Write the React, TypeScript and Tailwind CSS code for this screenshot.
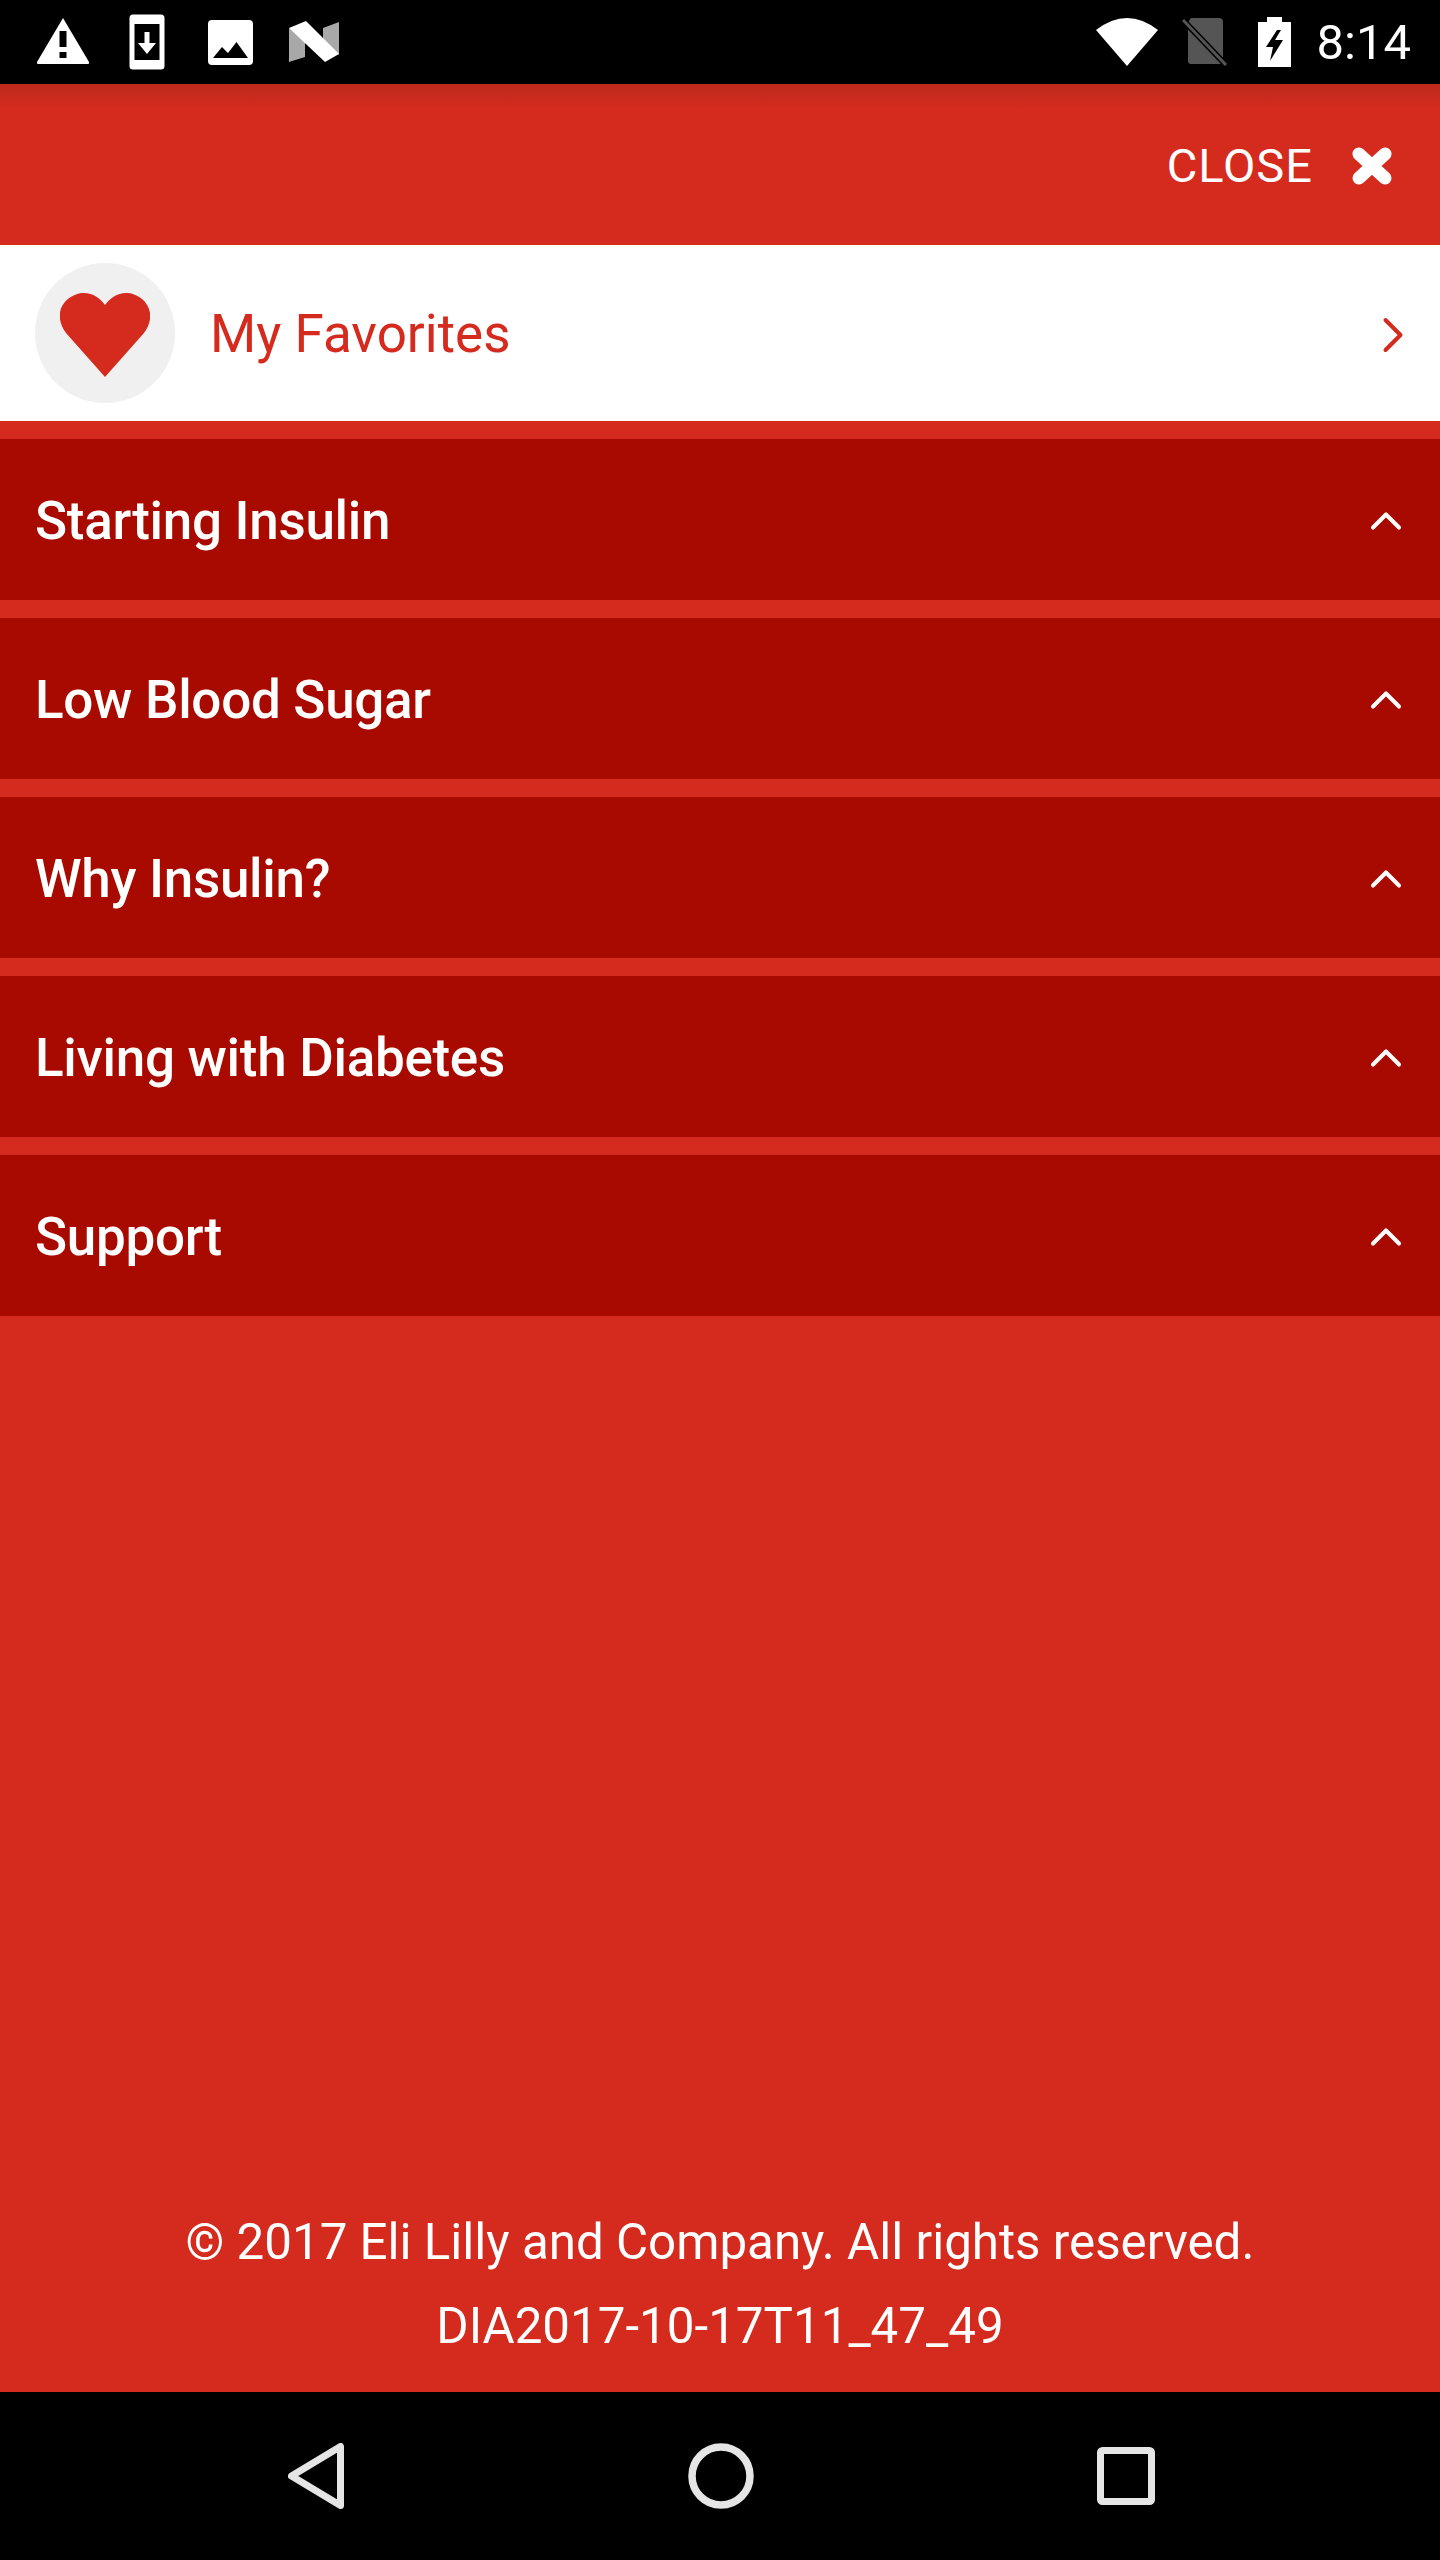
import { ChevronRight, ChevronUp } from 'lucide-react';

const topics = [
    'Starting Insulin',
    'Low Blood Sugar',
    'Why Insulin?',
    'Living with Diabetes',
    'Support',
];

function StatusBar() {
    return (
        <div className="flex h-[84px] shrink-0 items-center justify-between bg-black text-white">
            {/* Notification icons */}
            <div className="flex items-center pl-[36px]">
                <svg width="54" height="48" viewBox="0 0 54 48" className="mt-[-3px]">
                    <path
                        d="M27 1 L53 45 Q53.500 47 52 47 L2 47 Q0.500 47 1 45 Z M23.500 14 L23.500 30 L30.500 30 L30.500 14 Z M23.500 35 L23.500 41 L30.500 41 L30.500 35 Z"
                        fill="#fff"
                        fillRule="evenodd"
                    />
                </svg>
                <svg width="36" height="56" viewBox="0 0 36 56" className="ml-[39px]">
                    <path
                        d="M4 0.500 L32 0.500 Q35.500 0.500 35.500 4 L35.500 52 Q35.500 55.500 32 55.500 L4 55.500 Q0.500 55.500 0.500 52 L0.500 4 Q0.500 0.500 4 0.500 Z M5.500 10 L5.500 46 L30.500 46 L30.500 10 Z"
                        fill="#fff"
                        fillRule="evenodd"
                    />
                    <path d="M15.500 18 L20.500 18 L20.500 29 L27 29 L18 40 L9 29 L15.500 29 Z" fill="#fff" />
                </svg>
                <svg width="45" height="45" viewBox="0 0 45 45" className="ml-[43px]">
                    <rect width="45" height="45" rx="4" fill="#fff" />
                    <path d="M5 38 L14 27 L20 33 L28.500 22 L40 38 Z" fill="#000" />
                </svg>
                <svg width="51" height="42" viewBox="0 0 51 42" className="ml-[36px]">
                    <path d="M0 7 L16 18 L16 36 L0 41 Z" fill="#a8a8a8" />
                    <path d="M34 7 L50 1 L50 34 L38 24 L34 18 Z" fill="#a8a8a8" />
                    <path d="M0 7 L17 0 L50 33 L36 41 Z" fill="#fff" />
                </svg>
            </div>

            {/* System icons and clock */}
            <div className="flex items-center pr-[29px]">
                <svg width="62" height="48" viewBox="0 0 62 48">
                    <path d="M0 12 Q31 -12 62 12 L31 48 Z" fill="#fff" />
                </svg>
                <svg width="46" height="50" viewBox="0 0 46 50" className="ml-[24px]">
                    <path d="M6 6 L8 2 Q8.500 1 10 1 L37 1 Q41 1 41 5 L41 44 Q41 47 38 47 L9 47 Q6 47 6 44 Z" fill="#555" />
                    <path d="M1 3 L44 48" stroke="#000" strokeWidth="6" />
                    <path d="M1 3 L44 48" stroke="#555" strokeWidth="3" />
                </svg>
                <svg width="33" height="50" viewBox="0 0 33 50" className="ml-[30px]">
                    <path
                        d="M9 0 L24 0 L24 5 L33 5 L33 50 L0 50 L0 5 L9 5 Z M19 13 L8 30 L15 30 L12 44 L25 23 L17 23 L23 13 Z"
                        fill="#fff"
                        fillRule="evenodd"
                    />
                </svg>
                <span className="ml-[26px] text-[49px] leading-none">8:14</span>
            </div>
        </div>
    );
}

function Header() {
    return (
        <div className="flex h-[161px] items-center justify-end bg-[linear-gradient(#bb2a1c,#d52b1e_24px)] pr-[48px] pt-[2px]">
            <span className="text-[47px] leading-none tracking-[1px] text-white">CLOSE</span>
            <svg width="40" height="38" viewBox="0 0 40 38" className="ml-[39px]">
                <path d="M7 7 L33 31 M33 7 L7 31" stroke="#fff" strokeWidth="13" strokeLinecap="round" />
            </svg>
        </div>
    );
}

function FavoritesRow() {
    return (
        <div className="flex h-[176px] items-center bg-white pl-[35px] pr-[17px]">
            <div className="flex h-[140px] w-[140px] items-center justify-center rounded-full bg-[#f0f0f0]">
                <svg width="90" height="84" viewBox="0 0 90 84" className="mt-[3px]">
                    <path
                        d="M45 84 L6 40 C-10 18 8 0 24 0 C33 0 40 5 45 12 C50 5 57 0 66 0 C82 0 100 18 84 40 Z"
                        fill="#d52b1e"
                    />
                </svg>
            </div>
            <span className="ml-[35px] mt-[3px] flex-1 text-[53px] leading-none text-[#d52b1e]">
                My Favorites
            </span>
            <ChevronRight size={60} strokeWidth={1.6} className="mt-[4px] text-[#d52b1e]" />
        </div>
    );
}

export default function App() {
    return (
        <div className="flex min-h-[2560px] w-[1440px] flex-col bg-[#d52b1e] font-['Roboto',sans-serif]">
            <StatusBar />

            <div className="flex flex-1 flex-col">
                <Header />
                <FavoritesRow />

                {/* Topic list */}
                <div className="mt-[18px] flex flex-col gap-[18px]">
                    {topics.map((topic) => (
                        <div
                            key={topic}
                            className="flex h-[161px] items-center justify-between bg-[#a90a00] pl-[35px] pr-[28px] text-white"
                        >
                            <span className="mt-[3px] text-[53px] font-medium leading-none tracking-[-0.3px]">
                                {topic}
                            </span>
                            <ChevronUp size={52} strokeWidth={1.85} className="mt-[3px]" />
                        </div>
                    ))}
                </div>

                {/* Footer */}
                <div className="mt-auto pb-[24px] text-center text-[49.300px] leading-[84px] text-white">
                    <p>© 2017 Eli Lilly and Company. All rights reserved.</p>
                    <p>DIA2017-10-17T11_47_49</p>
                </div>
            </div>

            {/* Navigation bar */}
            <div className="relative flex h-[168px] shrink-0 items-center bg-black">
                <svg width="56" height="66" viewBox="0 0 56 66" className="ml-[288px]">
                    <path
                        d="M52.500 3.500 L52.500 62.500 L3.500 33 Z"
                        fill="none"
                        stroke="#e5e5e5"
                        strokeWidth="7"
                        strokeLinejoin="round"
                    />
                </svg>
                <svg width="66" height="66" viewBox="0 0 66 66" className="ml-[344px]">
                    <circle cx="33" cy="33" r="29" fill="none" stroke="#e5e5e5" strokeWidth="7.500" />
                </svg>
                <svg width="58" height="58" viewBox="0 0 58 58" className="ml-[343px]">
                    <rect x="3.500" y="3.500" width="51" height="51" rx="2" fill="none" stroke="#e5e5e5" strokeWidth="7" />
                </svg>
            </div>
        </div>
    );
}
